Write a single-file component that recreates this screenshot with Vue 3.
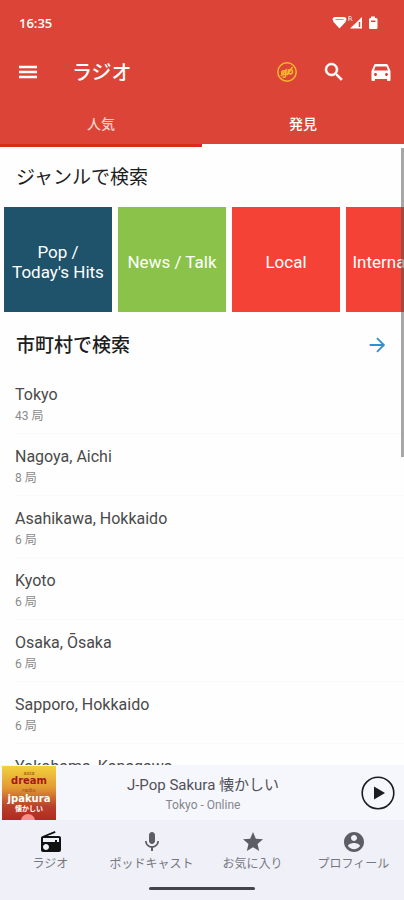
<script setup>
import { ref } from 'vue'

const tabs = ['人気', '発見']
const activeTab = ref('発見')

const genres = [
  { name: 'Pop / Today\'s Hits', tone: 'navy' },
  { name: 'News / Talk', tone: 'green' },
  { name: 'Local', tone: 'red' },
  { name: 'International', tone: 'red' },
]

const cities = [
  { name: 'Tokyo', count: 43 },
  { name: 'Nagoya, Aichi', count: 8 },
  { name: 'Asahikawa, Hokkaido', count: 6 },
  { name: 'Kyoto', count: 6 },
  { name: 'Osaka, Ōsaka', count: 6 },
  { name: 'Sapporo, Hokkaido', count: 6 },
  { name: 'Yokohama, Kanagawa', count: 5 },
]
</script>

<template>
  <div class="app">
    <header class="header">
      <div class="status">
        <span class="clock">16:35</span>
        <svg class="status-icons" viewBox="0 0 48 16" aria-hidden="true">
          <path d="M.5 4Q1 2 3 2H12Q14 2 14.500 4L13.500 7 7.500 13.500 1.500 7Z" fill="#fff" />
          <path d="M3.500 4.500H11.500" fill="none" stroke="#e8837a" stroke-width="1" />
          <path d="M30 2V13.500H18Z" fill="#fff" />
          <path d="M27.500 7V12" stroke="#db4437" stroke-width="1.500" />
          <path d="M16.800 6V1.500H18.800Q20.300 2.600 18.800 3.800H16.800M18.600 3.800L20.300 6" fill="none" stroke="#fbd5d1" stroke-width="1" />
          <path d="M39 1.500H43V3H44Q45.500 3 45.500 4.500V12.500Q45.500 14 44 14H38.500Q37 14 37 12.500V4.500Q37 3 38.500 3H39Z" fill="#fff" />
          <path d="M39 5.500H43.500V7H39Z" fill="#db4437" />
        </svg>
      </div>
      <div class="toolbar">
        <button class="icon-button" aria-label="Menu">
          <svg viewBox="0 0 24 24"><path d="M3 18.300h18v-2.600H3v2.600zm0-5h18v-2.600H3v2.600zm0-7.600v2.600h18V5.700H3z" /></svg>
        </button>
        <h1 class="title">ラジオ</h1>
        <div class="actions">
          <button class="icon-button" aria-label="Go ad-free">
            <svg class="badge" viewBox="0 0 24 24">
              <circle cx="12" cy="12" r="9.200" />
              <circle cx="8.800" cy="12.800" r="2" />
              <path d="M10.800 10.500V15.500Q10.500 18 7.500 17M12 15L17.500 7" />
              <circle cx="15.300" cy="11.800" r="2.200" />
              <path d="M6 16L12 9" />
            </svg>
          </button>
          <button class="icon-button" aria-label="Search">
            <svg viewBox="0 0 24 24"><path d="M15.500 14h-.79l-.28-.27A6.471 6.471 0 0 0 16 9.500 6.500 6.500 0 1 0 9.500 16c1.610 0 3.090-.59 4.230-1.570l.27.28v.79l5 4.990L20.490 19l-4.990-5zm-6 0C7.010 14 5 11.990 5 9.500S7.010 5 9.500 5 14 7.010 14 9.500 11.990 14 9.500 14z" stroke="#fff" stroke-width=".5" /></svg>
          </button>
          <button class="icon-button" aria-label="Car mode">
            <svg viewBox="0 0 24 24"><path d="M18.920 5.010C18.720 4.420 18.160 4 17.500 4h-11c-.66 0-1.210.42-1.420 1.010L2.500 11v9c0 .55.45 1 1 1H5c.55 0 1-.45 1-1v-1h12v1c0 .55.45 1 1 1h1.500c.55 0 1-.45 1-1v-9l-2.580-5.990zM6.500 16c-.83 0-1.500-.67-1.500-1.500S5.670 13 6.500 13s1.500.67 1.500 1.500S7.330 16 6.500 16zm11 0c-.83 0-1.500-.67-1.500-1.500s.67-1.500 1.500-1.500 1.500.67 1.500 1.500-.67 1.500-1.500 1.500zM5 10.500l1.500-4h11l1.500 4H5z" /></svg>
          </button>
        </div>
      </div>
      <nav class="tabs">
        <button
          v-for="tab in tabs"
          :key="tab"
          class="tab"
          :class="{ active: tab === activeTab }"
          @click="activeTab = tab"
        >{{ tab }}</button>
      </nav>
    </header>

    <main class="content">
      <section>
        <h2 class="heading">ジャンルで検索</h2>
        <div class="genres">
          <button v-for="genre in genres" :key="genre.name" class="genre" :class="genre.tone">{{ genre.name }}</button>
        </div>
      </section>
      <section>
        <div class="heading-row">
          <h2 class="heading strong">市町村で検索</h2>
          <button class="more" aria-label="すべて表示">
            <svg viewBox="0 0 24 24"><path d="M4 12H19M12 4.500L19.500 12L12 19.500" /></svg>
          </button>
        </div>
        <ul class="cities">
          <li v-for="city in cities" :key="city.name">
            <a class="city" href="#">
              <span class="city-name">{{ city.name }}</span>
              <span class="city-count">{{ city.count }} 局</span>
            </a>
          </li>
        </ul>
      </section>
      <div class="scroll-thumb"></div>
    </main>

    <section class="player">
      <div class="cover">
        <span class="cover-small">asia</span>
        <span class="cover-dream">dream</span>
        <span class="cover-small">radio</span>
        <span class="cover-name">jpakura</span>
        <span class="cover-sub">懐かしい</span>
        <span class="cover-dot"></span>
      </div>
      <div class="track">
        <span class="track-name">J-Pop Sakura 懐かしい</span>
        <span class="track-info">Tokyo - Online</span>
      </div>
      <button class="play" aria-label="Play">
        <svg viewBox="0 0 36 36">
          <circle cx="18" cy="18" r="15.800" fill="none" stroke="#1b1c20" stroke-width="1.600" />
          <path d="M14 11.500V24.500L25 18Z" fill="#1b1c20" />
        </svg>
      </button>
    </section>

    <footer class="footer">
      <nav class="bottom-nav">
        <a class="nav-item current" href="#">
          <svg viewBox="0 0 24 24"><path d="M3.240 6.150C2.510 6.430 2 7.170 2 8v12c0 1.100.89 2 2 2h16c1.110 0 2-.9 2-2V8c0-1.110-.89-2-2-2H8.300l8.260-3.340L15.880 1 3.240 6.150zM7 20c-1.660 0-3-1.340-3-3s1.340-3 3-3 3 1.340 3 3-1.340 3-3 3zm13-8h-2v-2h-2v2H4V8h16v4z" /></svg>
          <span>ラジオ</span>
        </a>
        <a class="nav-item" href="#">
          <svg viewBox="0 0 24 24"><path d="M12 14c1.660 0 3-1.340 3-3V5c0-1.660-1.340-3-3-3S9 3.340 9 5v6c0 1.660 1.340 3 3 3zm5.300-3c0 3-2.540 5.100-5.300 5.100S6.700 14 6.700 11H5c0 3.410 2.720 6.230 6 6.720V21h2v-3.280c3.280-.48 6-3.300 6-6.720h-1.700z" /></svg>
          <span>ポッドキャスト</span>
        </a>
        <a class="nav-item" href="#">
          <svg viewBox="0 0 24 24"><path d="M12 17.270L18.180 21l-1.640-7.030L22 9.240l-7.190-.61L12 2 9.190 8.630 2 9.240l5.460 4.730L5.820 21z" /></svg>
          <span>お気に入り</span>
        </a>
        <a class="nav-item" href="#">
          <svg viewBox="0 0 24 24"><path d="M12 2C6.480 2 2 6.480 2 12s4.480 10 10 10 10-4.480 10-10S17.520 2 12 2zm0 3c1.660 0 3 1.340 3 3s-1.340 3-3 3-3-1.340-3-3 1.340-3 3-3zm0 14.200c-2.500 0-4.710-1.280-6-3.220.03-1.990 4-3.080 6-3.080 1.990 0 5.970 1.090 6 3.080-1.290 1.940-3.500 3.220-6 3.220z" /></svg>
          <span>プロフィール</span>
        </a>
      </nav>
      <div class="home-bar"></div>
    </footer>
  </div>
</template>

<style>
body {
  margin: 0;
  background: #fefefe;
}
</style>

<style scoped>
* {
  box-sizing: border-box;
}

.app {
  display: flex;
  flex-direction: column;
  height: 100vh;
  overflow: hidden;
  font-family: Roboto, "Noto Sans CJK JP", sans-serif;
  color: #4a4a4a;
  background: #fefefe;
}

button {
  border: 0;
  padding: 0;
  background: none;
  font: inherit;
  color: inherit;
  cursor: pointer;
}

a {
  color: inherit;
  text-decoration: none;
}

svg {
  display: block;
}

.header {
  flex: none;
  background: #db4437;
  color: #fff;
}

.status {
  display: flex;
  align-items: center;
  justify-content: space-between;
  height: 46px;
  padding: 0 24px 0 19px;
}

.clock {
  font-family: "Open Sans", Roboto, sans-serif;
  font-size: 13px;
  font-weight: 600;
}

.status-icons {
  width: 48px;
  height: 16px;
}

.toolbar {
  display: flex;
  align-items: center;
  height: 52px;
  padding: 0 11px 0 16px;
}

.icon-button svg {
  width: 24px;
  height: 24px;
  fill: #fff;
}

.icon-button .badge {
  fill: none;
  stroke: #f5b82e;
  stroke-width: 1.5px;
}

.title {
  margin: 0 0 0 32px;
  padding-top: 2px;
  font-size: 20px;
  line-height: 28px;
  font-weight: 500;
}

.actions {
  display: flex;
  gap: 23px;
  margin-left: auto;
}

.tabs {
  display: flex;
  height: 49px;
}

.tab {
  flex: 1;
  padding-top: 4px;
  border-bottom: 3px solid #d62d1b;
  font-size: 14px;
  font-weight: 500;
  color: #f7cbc7;
}

.tab.active {
  border-bottom-color: #fff;
  color: #fff;
}

.content {
  position: relative;
  flex: 1;
  min-height: 0;
  overflow: hidden;
}

.heading {
  margin: 0;
  padding: 17px 16px 15px;
  font-size: 19px;
  line-height: 28px;
  font-weight: 400;
  color: #1d1d1d;
}

.strong {
  font-weight: 500;
}

.genres {
  display: flex;
  gap: 6px;
  padding-left: 4px;
  overflow: hidden;
}

.genre {
  flex: none;
  width: 108px;
  height: 105px;
  padding: 4px 6px 0;
  font-size: 17px;
  line-height: 20px;
  color: #fff;
}

.navy {
  background: #1f536b;
}

.green {
  background: #8bc34a;
}

.red {
  background: #f44336;
}

.heading-row {
  display: flex;
  align-items: center;
  justify-content: space-between;
  height: 60px;
  padding: 6px 16px 0 0;
}

.more svg {
  width: 22px;
  height: 22px;
  fill: none;
  stroke: #3090cc;
  stroke-width: 2px;
}

.cities {
  margin: 0;
  padding: 0 0 0 15px;
  list-style: none;
}

.city {
  display: flex;
  flex-direction: column;
  gap: 3px;
  height: 62px;
  padding-top: 13px;
  border-bottom: 1px solid #fafafa;
}

.city-name {
  font-size: 16px;
  line-height: 20px;
}

.city-count {
  font-size: 12px;
  line-height: 16px;
  color: #8a8a8a;
}

.scroll-thumb {
  position: absolute;
  top: 1px;
  right: 0;
  width: 3px;
  height: 50%;
  background: rgba(80, 80, 80, 0.5);
}

.player {
  flex: none;
  display: flex;
  align-items: center;
  height: 55px;
  padding: 0 8px 0 2px;
  background: #f6f7fc;
}

.cover {
  position: relative;
  display: flex;
  flex-direction: column;
  align-items: center;
  width: 54px;
  height: 54px;
  padding-top: 3px;
  overflow: hidden;
  background: linear-gradient(#f2d13c, #e39a34 40%, #b9402a 75%, #b02a20);
  color: #fff;
}

.cover-small {
  font-size: 6px;
  line-height: 7px;
  color: #a8521c;
}

.cover-dream {
  font-family: "DejaVu Sans", sans-serif;
  font-size: 10px;
  line-height: 10px;
  font-weight: 700;
  color: #a81616;
}

.cover-name {
  font-family: "DejaVu Sans", sans-serif;
  font-size: 10px;
  line-height: 12px;
  font-weight: 700;
}

.cover-sub {
  font-size: 7px;
  line-height: 8px;
  font-weight: 700;
}

.cover-dot {
  position: absolute;
  bottom: -8px;
  left: 19px;
  width: 14px;
  height: 14px;
  border-radius: 50%;
  background: #f98f88;
}

.track {
  flex: 1;
  display: flex;
  flex-direction: column;
  align-items: center;
  gap: 2px;
  padding: 2px 10px 0 0;
}

.track-name {
  font-size: 15px;
  line-height: 20px;
  color: #505158;
}

.track-info {
  font-size: 12px;
  line-height: 16px;
  color: #85868c;
}

.play svg {
  width: 36px;
  height: 36px;
}

.footer {
  flex: none;
  height: 80px;
  background: #eff0f8;
}

.bottom-nav {
  display: flex;
  height: 67px;
}

.nav-item {
  flex: 1;
  display: flex;
  flex-direction: column;
  align-items: center;
  gap: 2px;
  padding-top: 10px;
  font-size: 12px;
  line-height: 16px;
  color: #77787e;
  white-space: nowrap;
}

.nav-item svg {
  width: 24px;
  height: 24px;
  fill: #5d5e65;
}

.current svg {
  fill: #111;
}

.home-bar {
  width: 106px;
  height: 3px;
  margin: 0 auto;
  border-radius: 2px;
  background: #44454b;
}
</style>
